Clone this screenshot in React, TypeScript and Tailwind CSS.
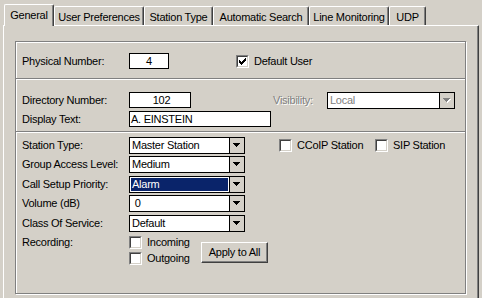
import React from "react";

function Arrow({ disabled }: { disabled?: boolean }) {
  return (
    <svg width="8" height="5" viewBox="0 0 8 5" className={disabled ? "[filter:drop-shadow(1px_1px_0_#fff)]" : ""}>
      <polygon points="0,0 7,0 3.5,4" fill={disabled ? "#808080" : "#000"} shapeRendering="crispEdges" />
    </svg>
  );
}

function Combo({ value, className, selected, disabled }: { value: string; className: string; selected?: boolean; disabled?: boolean }) {
  return (
    <div className={`flex h-[17px] border border-black bg-white ${className}`}>
      {selected ? (
        <div className="flex-1 m-[1px] bg-[#0a246a] text-white flex items-center pl-[1px]">{value}</div>
      ) : (
        <div className={`flex-1 flex items-center pl-[2px] ${disabled ? "text-[#808080]" : ""}`}>{value}</div>
      )}
      <div className="w-[15px] border-l border-black bg-[#d4d0c8] flex items-center justify-center">
        <Arrow disabled={disabled} />
      </div>
    </div>
  );
}

function Check({ checked }: { checked?: boolean }) {
  return (
    <div className="w-[13px] h-[13px] shrink-0 border border-t-[#808080] border-l-[#808080] border-b-white border-r-white">
      <div className="w-full h-full border border-t-[#404040] border-l-[#404040] border-b-[#d4d0c8] border-r-[#d4d0c8] bg-white flex items-center justify-center">
        {checked && (
          <svg width="7" height="7" viewBox="0 0 7 7" shapeRendering="crispEdges">
            <rect x="0" y="2" width="1" height="3" />
            <rect x="1" y="3" width="1" height="3" />
            <rect x="2" y="4" width="1" height="3" />
            <rect x="3" y="3" width="1" height="3" />
            <rect x="4" y="2" width="1" height="3" />
            <rect x="5" y="1" width="1" height="3" />
            <rect x="6" y="0" width="1" height="3" />
          </svg>
        )}
      </div>
    </div>
  );
}

function Separator() {
  return <div className="h-[2px] border-t border-t-[#808080] border-b border-b-white" />;
}

const tabs = [
  { label: "General", w: "w-[50px]" },
  { label: "User Preferences", w: "w-[90px]" },
  { label: "Station Type", w: "w-[69px]" },
  { label: "Automatic Search", w: "w-[96px]" },
  { label: "Line Monitoring", w: "w-[80px]" },
  { label: "UDP", w: "w-[37px]" },
];

export default function App() {
  return (
    <div className="w-[482px] h-[298px] bg-[#d4d0c8] overflow-hidden text-black text-[11px] leading-none tracking-[-0.25px] font-['Liberation_Sans',Arial,sans-serif]">
      {/* tab strip */}
      <div className="relative z-10 flex items-end h-[25px] pl-[4px]">
        {tabs.map((t, i) =>
          i === 0 ? (
            <div
              key={t.label}
              className={`${t.w} h-[22px] -mb-[1px] bg-[#d4d0c8] border-l border-t border-white border-r border-r-[#404040] shadow-[inset_-1px_0_0_#808080] rounded-t-[2px] flex items-center justify-center pb-[1px]`}
            >
              {t.label}
            </div>
          ) : (
            <div
              key={t.label}
              className={`${t.w} h-[19px] border-l border-t border-white border-r border-r-[#404040] shadow-[inset_-1px_0_0_#808080] rounded-t-[2px] flex items-center justify-center pt-[2px]`}
            >
              {t.label}
            </div>
          )
        )}
      </div>

      {/* tab panel */}
      <div className="ml-[3px] w-[476px] h-[273px] border-l border-t border-white border-r border-r-[#404040] shadow-[inset_-1px_0_0_#808080] pt-[15px] pl-[11px]">
        <div className="w-[451px] h-[253px] border border-[#808080] shadow-[1px_1px_0_#fff,inset_1px_1px_0_#fff] flex flex-col">
          {/* physical number */}
          <div className="h-[36px] pt-[11px] pl-[6px]">
            <div className="flex items-center h-[16px]">
              <span className="w-[107px]">Physical Number:</span>
              <div className="w-[40px] h-[16px] border border-black bg-white flex items-center justify-center">4</div>
              <div className="ml-[67px] flex items-center">
                <Check checked />
                <span className="ml-[5px]">Default User</span>
              </div>
            </div>
          </div>
          <Separator />

          {/* directory */}
          <div className="h-[51px] pt-[12px] pl-[6px] flex flex-col gap-[3px]">
            <div className="flex items-center h-[16px]">
              <span className="w-[107px]">Directory Number:</span>
              <div className="w-[62px] h-[16px] border border-black bg-white flex items-center justify-center pl-[3px]">102</div>
              <span className="ml-[82px] w-[54px] text-[#808080] [text-shadow:1px_1px_0_#fff]">Visibility:</span>
              <Combo value="Local" className="w-[128px] h-[16px]" disabled />
            </div>
            <div className="flex items-center h-[16px]">
              <span className="w-[107px]">Display Text:</span>
              <div className="w-[142px] h-[16px] border border-black bg-white flex items-center pl-[1px]">A. EINSTEIN</div>
            </div>
          </div>
          <Separator />

          {/* station settings */}
          <div className="pt-[4px] pl-[6px] flex flex-col">
            <div className="flex items-center h-[17px]">
              <span className="w-[107px]">Station Type:</span>
              <Combo value="Master Station" className="w-[116px]" />
              <div className="ml-[34px] w-[96px] flex items-center">
                <Check />
                <span className="ml-[5px]">CCoIP Station</span>
              </div>
              <div className="flex items-center">
                <Check />
                <span className="ml-[5px]">SIP Station</span>
              </div>
            </div>
            <div className="flex items-center h-[17px] mt-[2px]">
              <span className="w-[107px]">Group Access Level:</span>
              <Combo value="Medium" className="w-[116px]" />
            </div>
            <div className="flex items-center h-[17px] mt-[3px]">
              <span className="w-[107px]">Call Setup Priority:</span>
              <Combo value="Alarm" className="w-[116px]" selected />
            </div>
            <div className="flex items-center h-[17px] mt-[2px]">
              <span className="w-[107px]">Volume (dB)</span>
              <Combo value=" 0" className="w-[116px] whitespace-pre" />
            </div>
            <div className="flex items-center h-[17px] mt-[3px]">
              <span className="w-[107px]">Class Of Service:</span>
              <Combo value="Default" className="w-[116px]" />
            </div>

            <div className="flex items-start mt-[4px]">
              <span className="w-[107px] h-[13px] flex items-center">Recording:</span>
              <div className="w-[72px] flex flex-col gap-[3px]">
                <div className="flex items-center h-[13px]">
                  <Check />
                  <span className="ml-[5px]">Incoming</span>
                </div>
                <div className="flex items-center h-[13px]">
                  <Check />
                  <span className="ml-[5px]">Outgoing</span>
                </div>
              </div>
              <button className="mt-[6px] w-[67px] h-[21px] bg-[#d4d0c8] border border-t-white border-l-white border-b-[#404040] border-r-[#404040] shadow-[inset_-1px_-1px_0_#808080] flex items-center justify-center">
                Apply to All
              </button>
            </div>
          </div>
        </div>
      </div>
    </div>
  );
}
